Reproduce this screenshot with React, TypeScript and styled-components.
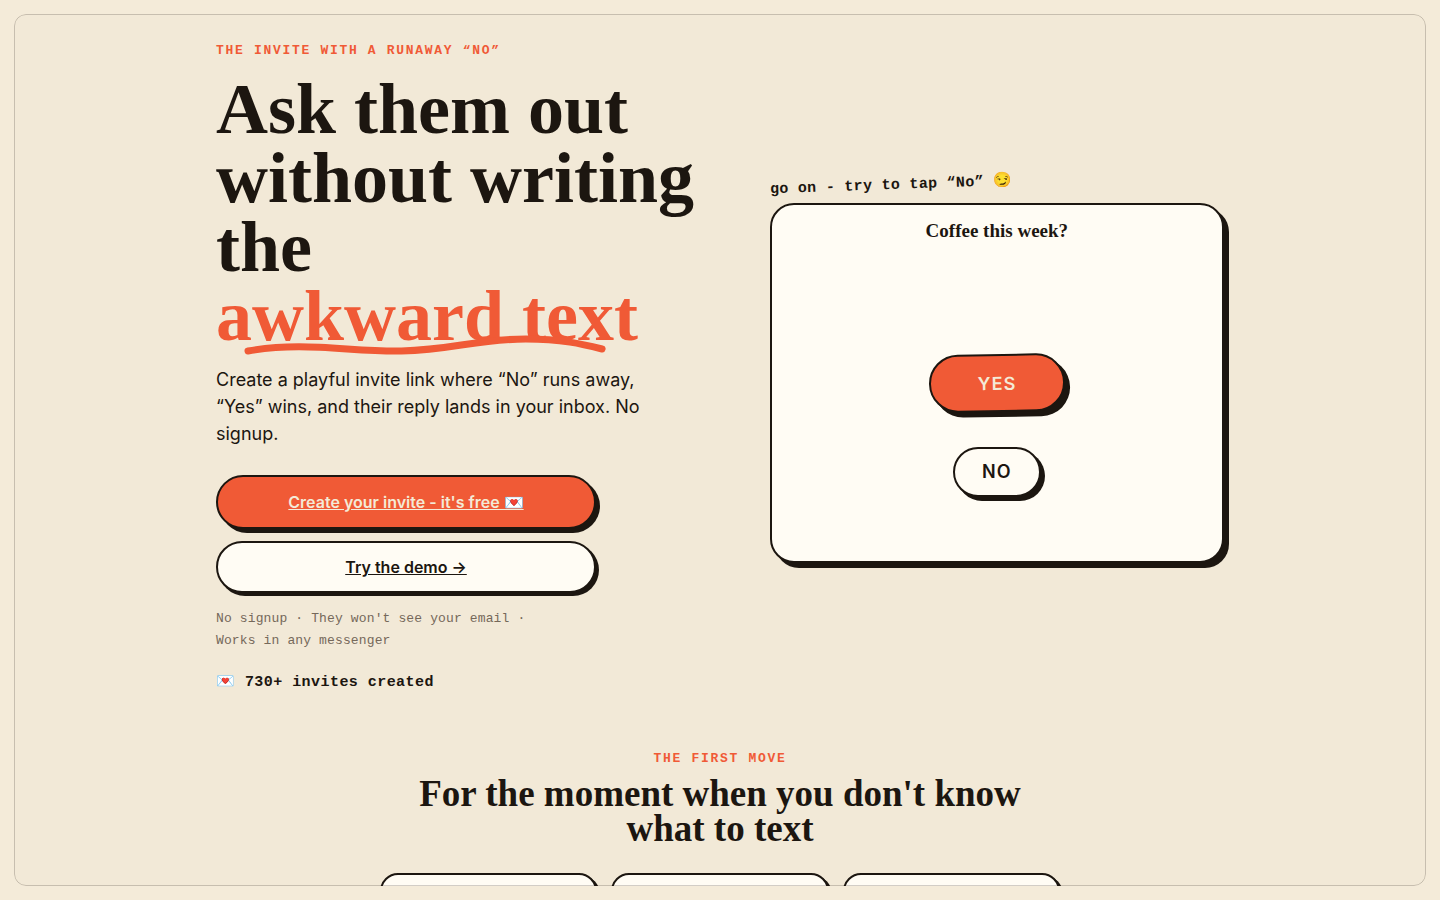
import React from "react";
import styled, { createGlobalStyle, css } from "styled-components";

const ink = "#1c1610";
const coral = "#f05a36";
const cream = "#f4ead7";
const page = "#f4ebd9";
const panel = "#f2e9d7";
const paper = "#fffcf4";

const serif = `"Liberation Serif", serif`;
const mono = `"Liberation Mono", monospace`;
const sans = `Inter, sans-serif`;

const GlobalStyle = createGlobalStyle`
  *, *::before, *::after { box-sizing: border-box; }
  body {
    margin: 0;
    background: ${page};
    color: ${ink};
    font-family: ${sans};
    -webkit-font-smoothing: antialiased;
  }
  h1, h2, p { margin: 0; }
`;

const Shell = styled.div`
  height: 100vh;
  padding: 14px;
`;

const Frame = styled.div`
  position: relative;
  height: 100%;
  border-radius: 12px;
  overflow: hidden;
  background: ${panel};

  &::after {
    content: "";
    position: absolute;
    inset: 0;
    border: 1px solid rgba(28, 22, 16, 0.2);
    border-radius: 12px;
    pointer-events: none;
  }
`;

const Scroller = styled.main`
  height: 100%;
  overflow-y: auto;
  scrollbar-width: none;
`;

const Hero = styled.section`
  display: grid;
  grid-template-columns: 1.1fr 1fr;
  gap: 54px;
  align-items: center;
  width: 100%;
  max-width: 1056px;
  margin: 0 auto;
  padding: 26px 24px 0;
`;

const HeroCopy = styled.div`
  min-width: 0;
`;

const Eyebrow = styled.p`
  color: ${coral};
  font: 700 13px/22px ${mono};
  letter-spacing: 0.13em;
  text-transform: uppercase;
`;

const Headline = styled.h1`
  margin-top: 13px;
  font: 700 72px/69px ${serif};
`;

const Accent = styled.span`
  position: relative;
  display: inline-block;
  color: ${coral};
`;

const Squiggle = styled.svg`
  position: absolute;
  left: 6%;
  bottom: -7px;
  width: 87%;
  height: 24px;
  overflow: visible;
`;

const Lead = styled.p`
  max-width: 440px;
  margin-top: 15px;
  font-size: 18px;
  line-height: 27px;
`;

const Actions = styled.div`
  display: flex;
  flex-direction: column;
  gap: 12px;
  max-width: 380px;
  margin-top: 28px;
`;

const ActionLink = styled.a<{ $primary?: boolean }>`
  display: flex;
  align-items: center;
  justify-content: center;
  border: 2px solid ${ink};
  border-radius: 999px;
  font-size: 16px;
  font-weight: 600;
  text-decoration: underline;
  ${({ $primary }) =>
    $primary
      ? css`
          min-height: 54px;
          background: ${coral};
          color: ${cream};
          box-shadow: 4px 4px 0 ${ink};
        `
      : css`
          min-height: 52px;
          background: ${paper};
          color: ${ink};
          box-shadow: 3px 3px 0 ${ink};
        `}
`;

const FinePrint = styled.p`
  max-width: 340px;
  margin-top: 15px;
  color: #75685a;
  font: 400 13px/22px ${mono};
  letter-spacing: 0.01em;
`;

const Counter = styled.p`
  margin-top: 20px;
  font: 700 15px/22px ${mono};
  letter-spacing: 0.03em;
`;

const Demo = styled.div`
  min-width: 0;
  padding-top: 2px;
`;

const Nudge = styled.p`
  width: fit-content;
  margin-bottom: 5px;
  font: 700 15px/24px ${mono};
  letter-spacing: 0.02em;
  transform: rotate(-2deg);
`;

const DemoCard = styled.div`
  display: flex;
  flex-direction: column;
  align-items: center;
  justify-content: space-between;
  min-height: 360px;
  padding: 13px 16px 64px;
  border: 2px solid ${ink};
  border-radius: 24px;
  background: ${paper};
  box-shadow: 5px 5px 0 ${ink};
`;

const Question = styled.p`
  font: 700 19px/26px ${serif};
`;

const Answers = styled.div`
  display: flex;
  flex-direction: column;
  align-items: center;
  gap: 35px;
`;

const Answer = styled.button<{ $yes?: boolean }>`
  border: 2px solid ${ink};
  border-radius: 999px;
  font-family: ${sans};
  font-size: 18px;
  font-weight: 600;
  letter-spacing: 0.06em;
  cursor: pointer;
  ${({ $yes }) =>
    $yes
      ? css`
          min-width: 136px;
          min-height: 58px;
          background: ${coral};
          color: ${cream};
          box-shadow: 5px 5px 0 ${ink};
          transform: rotate(-1deg);
        `
      : css`
          min-width: 88px;
          min-height: 50px;
          background: ${paper};
          color: ${ink};
          box-shadow: 4px 4px 0 ${ink};
        `}
`;

const Moments = styled.section`
  max-width: 728px;
  margin: 0 auto;
  padding: 54px 24px 64px;
  text-align: center;
`;

const MomentsTitle = styled.h2`
  margin-top: 6px;
  font: 700 37px/35px ${serif};
`;

const MomentGrid = styled.div`
  display: grid;
  grid-template-columns: repeat(3, 1fr);
  gap: 14px;
  margin-top: 27px;
`;

const MomentCard = styled.article`
  min-height: 160px;
  border: 2px solid ${ink};
  border-radius: 18px;
  background: ${paper};
  box-shadow: 3px 3px 0 ${ink};
`;

export default function App() {
  return (
    <>
      <GlobalStyle />
      <Shell>
        <Frame>
          <Scroller>
            <Hero>
              <HeroCopy>
                <Eyebrow>The invite with a runaway “No”</Eyebrow>
                <Headline>
                  Ask them out without writing the{" "}
                  <Accent>
                    awkward text
                    <Squiggle viewBox="0 0 366 24" preserveAspectRatio="none" aria-hidden="true">
                      <path
                        d="M7 17 C63 7 109 18 160 17 C211 16 235 5 284 5 C320 5 340 10 360 15"
                        fill="none"
                        stroke={coral}
                        strokeWidth="7"
                        strokeLinecap="round"
                      />
                    </Squiggle>
                  </Accent>
                </Headline>
                <Lead>
                  Create a playful invite link where “No” runs away, “Yes” wins, and their reply
                  lands in your inbox. No signup.
                </Lead>
                <Actions>
                  <ActionLink href="#create" $primary>
                    Create your invite - it's free 💌
                  </ActionLink>
                  <ActionLink href="#demo">Try the demo →</ActionLink>
                </Actions>
                <FinePrint>No signup · They won't see your email · Works in any messenger</FinePrint>
                <Counter>💌 730+ invites created</Counter>
              </HeroCopy>
              <Demo id="demo">
                <Nudge>go on - try to tap “No” 😏</Nudge>
                <DemoCard>
                  <Question>Coffee this week?</Question>
                  <Answers>
                    <Answer type="button" $yes>
                      YES
                    </Answer>
                    <Answer type="button">NO</Answer>
                  </Answers>
                </DemoCard>
              </Demo>
            </Hero>
            <Moments>
              <Eyebrow>The first move</Eyebrow>
              <MomentsTitle>For the moment when you don't know what to text</MomentsTitle>
              <MomentGrid>
                <MomentCard />
                <MomentCard />
                <MomentCard />
              </MomentGrid>
            </Moments>
          </Scroller>
        </Frame>
      </Shell>
    </>
  );
}
